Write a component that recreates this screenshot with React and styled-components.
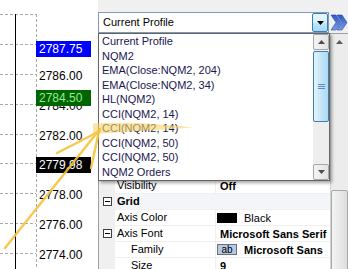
import React from 'react';
import styled, { createGlobalStyle } from 'styled-components';

const GlobalStyle = createGlobalStyle`
  html, body { margin: 0; padding: 0; background: #fff; }
  * { box-sizing: border-box; }
`;

const Screen = styled.div`
  position: relative;
  width: 348px;
  height: 269px;
  overflow: hidden;
  display: flex;
  font-family: "Liberation Sans", Arial, sans-serif;
  font-size: 11px;
  color: #000;
  background: #fff;
`;

/* ---------- chart ---------- */

const Chart = styled.div`
  position: relative;
  flex: none;
  width: 98px;
  height: 100%;
`;

const ChartLines = styled.svg`
  display: block;
`;

const PriceTag = styled.div`
  position: absolute;
  left: 36px;
  width: 55px;
  height: 16px;
  padding-left: 3px;
  font-size: 12px;
  line-height: 16px;
  white-space: nowrap;
  background: ${p => p.$bg || 'transparent'};
  color: ${p => p.$fg || '#000'};
`;

const Overlay = styled.svg`
  position: absolute;
  left: 0;
  top: 0;
  pointer-events: none;
`;

/* ---------- right panel ---------- */

const Panel = styled.div`
  position: relative;
  flex: 1;
  display: flex;
  flex-direction: column;
  background: #f0f0f0;
`;

const TopStrip = styled.div`
  flex: none;
  height: 12px;
`;

const ComboRow = styled.div`
  flex: none;
  display: flex;
  height: 21px;
`;

const Combo = styled.div`
  width: 231px;
  display: flex;
  align-items: stretch;
  background: #fff;
  border: 1px solid #7f9db9;
`;

const ComboText = styled.div`
  flex: 1;
  padding-left: 4px;
  line-height: 19px;
`;

const DropButton = styled.div`
  width: 16px;
  display: flex;
  align-items: center;
  justify-content: center;
  border: 1px solid #3c7fb1;
  border-radius: 2px;
  background: linear-gradient(#eaf6fd, #d9f0fc 50%, #bee6fd 51%, #a7d9f5);
`;

const ChevronBox = styled.div`
  flex: 1;
  display: flex;
  align-items: center;
  justify-content: center;
`;

const GridArea = styled.div`
  flex: 1;
  min-height: 0;
  display: flex;
  border-top: 1px solid #a0a0a0;
`;

const GridView = styled.div`
  width: 232px;
  overflow: hidden;
  background: #fff;
  border-left: 1px solid #a0a0a0;
`;

const Row = styled.div`
  display: grid;
  grid-template-columns: 16px 101px 1fr;
  height: 16px;
  background: ${p => (p.$cat ? '#f3f5f9' : '#fff')};
  border-bottom: 1px solid #f0f0f0;
`;

const Margin = styled.div`
  display: flex;
  align-items: center;
  justify-content: center;
  background: #f0f0f0;
`;

const Toggle = styled.span`
  position: relative;
  width: 9px;
  height: 9px;
  border: 1px solid #404040;
  background: #fff;
  &::after {
    content: '';
    position: absolute;
    left: 1px;
    top: 3px;
    width: 5px;
    height: 1px;
    background: #000;
  }
`;

const Name = styled.div`
  padding-left: ${p => (p.$indent ? 16 : 2)}px;
  line-height: 15px;
  white-space: nowrap;
  overflow: hidden;
  font-weight: ${p => (p.$cat ? 'bold' : 'normal')};
  border-right: ${p => (p.$cat ? 'none' : '1px solid #f0f0f0')};
`;

const Value = styled.div`
  display: flex;
  align-items: center;
  gap: 7px;
  padding-left: ${p => (p.$swatch ? 1 : 4)}px;
  white-space: nowrap;
  overflow: hidden;
  font-weight: ${p => (p.$bold ? 'bold' : 'normal')};
`;

const ColorSwatch = styled.span`
  flex: none;
  width: 20px;
  height: 10px;
  background: ${p => p.$color};
  border: 1px solid #000;
`;

const FontSwatch = styled.span`
  flex: none;
  width: 20px;
  height: 11px;
  font-size: 10px;
  line-height: 9px;
  font-weight: normal;
  text-align: center;
  background: #b3cbe8;
  border: 1px solid #6f6f6f;
`;

const ScrollBar = styled.div`
  display: flex;
  flex-direction: column;
  background: ${p => p.$track};
`;

const GridScroll = styled(ScrollBar)`
  flex: 1;
  border-left: 1px solid #d6d6d6;
`;

const ArrowButton = styled.div`
  flex: none;
  height: 16px;
  display: flex;
  align-items: center;
  justify-content: center;
  ${p => p.$framed && `
    border: 1px solid #a7a7a7;
    border-radius: 2px;
    background: linear-gradient(90deg, #f3f3f3, #e4e4e4);
  `}
`;

const Track = styled.div`
  flex: 1;
`;

const Thumb = styled.div`
  flex: none;
  height: ${p => p.$h}px;
  margin-top: ${p => p.$top}px;
  display: flex;
  flex-direction: column;
  align-items: center;
  justify-content: center;
  gap: 1px;
  border: 1px solid ${p => p.$border};
  border-radius: 2px;
  background: ${p => p.$fill};
`;

const Grip = styled.span`
  width: 7px;
  height: 1px;
  background: #5b8fb5;
`;

/* ---------- drop-down popup ---------- */

const Popup = styled.div`
  position: absolute;
  left: 0;
  top: 33px;
  width: 232px;
  height: 148px;
  display: flex;
  background: #fff;
  border: 1px solid #646464;
  box-shadow: 2px 2px 3px rgba(0, 0, 0, 0.35);
`;

const Items = styled.div`
  flex: 1;
  padding-top: 0;
`;

const Item = styled.div`
  height: 14.5px;
  line-height: 14.5px;
  padding-left: 3px;
  color: #1b1650;
  white-space: nowrap;
`;

const PopupScroll = styled(ScrollBar)`
  width: 16px;
`;

const UpArrow = ({ color = '#4d4d4d' }) => (
  <svg width="7" height="4" viewBox="0 0 7 4"><path d="M3.5 0L7 4H0z" fill={color} /></svg>
);

const DownArrow = ({ color = '#000' }) => (
  <svg width="7" height="4" viewBox="0 0 7 4"><path d="M0 0h7L3.5 4z" fill={color} /></svg>
);

const Chevrons = () => (
  <svg width="18" height="19" viewBox="0 0 18 19">
    <defs>
      <linearGradient id="chev" x1="0" y1="0" x2="0" y2="1">
        <stop offset="0" stopColor="#2b58c9" />
        <stop offset="1" stopColor="#7d9ce6" />
      </linearGradient>
    </defs>
    <path d="M1 2h5l5 7.5-5 7.5H1l5-7.5z" fill="url(#chev)" stroke="#2a4a9a" strokeWidth="0.6" />
    <path d="M7 2h5l5 7.5-5 7.5H7l5-7.5z" fill="url(#chev)" stroke="#2a4a9a" strokeWidth="0.6" />
  </svg>
);

const priceY = v => 44 + (2788 - v) * 14.93;

const axisTicks = [2786, 2784, 2782, 2778, 2776, 2774];
const gridTicks = [2790, 2788, 2786, 2784, 2782, 2780, 2778, 2776, 2774];

const markers = [
  { v: 2787.75, bg: '#0000ff', fg: '#fff' },
  { v: 2784.5, bg: '#006400', fg: '#90ee90' },
  { v: 2779.98, bg: '#000', fg: '#fff' },
];

const items = [
  'Current Profile',
  'NQM2',
  'EMA(Close:NQM2, 204)',
  'EMA(Close:NQM2, 34)',
  'HL(NQM2)',
  'CCI(NQM2, 14)',
  'CCI(NQM2, 14)',
  'CCI(NQM2, 50)',
  'CCI(NQM2, 50)',
  'NQM2 Orders',
];

const rows = [
  { cat: true, name: 'Appearance' },
  { name: 'Back Color', value: 'White' },
  { name: 'Border Color', value: 'Gray' },
  { name: 'Border Width', value: '1' },
  { name: 'Height', value: '120' },
  { name: 'Label', value: 'NQM2' },
  { name: 'Line Style', value: 'Dash' },
  { name: 'Scale', value: 'Linear' },
  { name: 'Title', value: 'On' },
  { name: 'Visibility', value: 'Off', bold: true },
  { cat: true, name: 'Grid' },
  { name: 'Axis Color', color: '#000', value: 'Black' },
  { name: 'Axis Font', toggle: true, value: 'Microsoft Sans Serif', bold: true },
  { name: 'Family', indent: true, font: true, value: 'Microsoft Sans', bold: true },
  { name: 'Size', indent: true, value: '9', bold: true },
];

export default function App() {
  return (
    <Screen>
      <GlobalStyle />
      <Chart>
        <ChartLines width="98" height="269">
          {gridTicks.map(v => {
            const y = Math.round(priceY(v)) + 0.5;
            return <line key={v} x1="0" x2="36" y1={y} y2={y} stroke="#aaa" strokeDasharray="3 2" />;
          })}
          <line x1="36.5" x2="36.5" y1="14" y2="269" stroke="#aaa" strokeDasharray="3 2" />
          <line x1="15.5" x2="15.5" y1="14" y2="269" stroke="#000" />
        </ChartLines>
        {axisTicks.map(v => (
          <PriceTag key={v} style={{ top: Math.round(priceY(v) - 6) }}>{v.toFixed(2)}</PriceTag>
        ))}
        {markers.map(m => (
          <PriceTag key={m.v} $bg={m.bg} $fg={m.fg} style={{ top: Math.round(priceY(m.v) - 6.5) }}>
            {m.v.toFixed(2)}
          </PriceTag>
        ))}
      </Chart>

      <Panel>
        <TopStrip />
        <ComboRow>
          <Combo>
            <ComboText>Current Profile</ComboText>
            <DropButton><DownArrow /></DropButton>
          </Combo>
          <ChevronBox><Chevrons /></ChevronBox>
        </ComboRow>
        <GridArea>
          <GridView>
            {rows.map((r, i) => (
              <Row key={i} $cat={r.cat}>
                <Margin>{(r.cat || r.toggle) && <Toggle />}</Margin>
                <Name $cat={r.cat} $indent={r.indent}>{r.name}</Name>
                {!r.cat && (
                  <Value $bold={r.bold} $swatch={r.color || r.font}>
                    {r.color && <ColorSwatch $color={r.color} />}
                    {r.font && <FontSwatch>ab</FontSwatch>}
                    <span>{r.value}</span>
                  </Value>
                )}
                {r.cat && <div />}
              </Row>
            ))}
          </GridView>
          <GridScroll $track="#ececec">
            <ArrowButton><UpArrow color="#5a5a5a" /></ArrowButton>
            <Thumb $top={140} $h={90} $border="#a9a9a9" $fill="linear-gradient(90deg, #f4f4f4, #dedede)" />
          </GridScroll>
        </GridArea>

        <Popup>
          <Items>
            {items.map((t, i) => <Item key={i}>{t}</Item>)}
          </Items>
          <PopupScroll $track="#eeeeee">
            <ArrowButton $framed><UpArrow /></ArrowButton>
            <Thumb $top={1} $h={71} $border="#3c7fb1" $fill="linear-gradient(90deg, #e3f4fd, #bfe3f8 60%, #aed9f3)">
              <Grip /><Grip /><Grip />
            </Thumb>
            <Track />
            <ArrowButton $framed><DownArrow color="#4d4d4d" /></ArrowButton>
          </PopupScroll>
        </Popup>
      </Panel>

      <Overlay width="348" height="269">
        <path d="M93 123.5 Q140 121 193 127.5 Q140 131 93 134 Z" fill="#f6d469" fillOpacity="0.6" />
        <g stroke="#f7c33a" strokeWidth="2.4" strokeLinecap="round" fill="none" opacity="0.9">
          <path d="M5 248 L100 129" />
          <path d="M57 153 L100 131" />
          <path d="M91 168 L99 131" />
        </g>
      </Overlay>
    </Screen>
  );
}
